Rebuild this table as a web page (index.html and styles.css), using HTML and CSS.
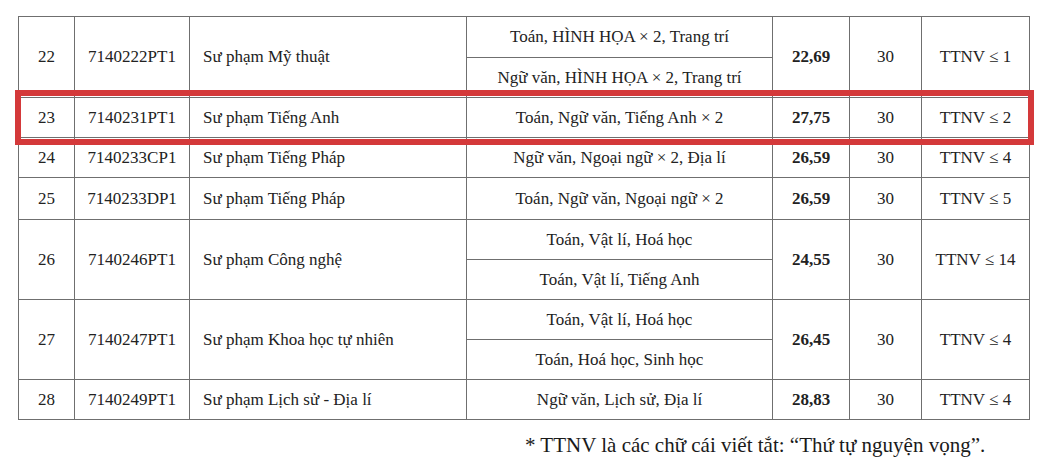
FILE: index.html
```html
<!DOCTYPE html>
<html lang="vi">
<head>
<meta charset="utf-8">
<title>Điểm chuẩn</title>
<link rel="stylesheet" href="styles.css">
</head>
<body>
<div class="page">
  <div class="table-wrap">
    <table class="scores">
      <colgroup>
        <col class="c-stt"><col class="c-code"><col class="c-name"><col class="c-subj"><col class="c-score"><col class="c-quota"><col class="c-ttnv">
      </colgroup>
      <tbody>
        <tr class="r41">
          <td class="ctr" rowspan="2">22</td>
          <td class="ctr" rowspan="2">7140222PT1</td>
          <td class="name" rowspan="2">Sư phạm Mỹ thuật</td>
          <td class="ctr">Toán, HÌNH HỌA × 2, Trang trí</td>
          <td class="ctr bold" rowspan="2">22,69</td>
          <td class="ctr" rowspan="2">30</td>
          <td class="ctr" rowspan="2">TTNV ≤ 1</td>
        </tr>
        <tr><td class="ctr">Ngữ văn, HÌNH HỌA × 2, Trang trí</td></tr>
        <tr>
          <td class="ctr">23</td>
          <td class="ctr">7140231PT1</td>
          <td class="name">Sư phạm Tiếng Anh</td>
          <td class="ctr">Toán, Ngữ văn, Tiếng Anh × 2</td>
          <td class="ctr bold">27,75</td>
          <td class="ctr">30</td>
          <td class="ctr">TTNV ≤ 2</td>
        </tr>
        <tr>
          <td class="ctr">24</td>
          <td class="ctr">7140233CP1</td>
          <td class="name">Sư phạm Tiếng Pháp</td>
          <td class="ctr">Ngữ văn, Ngoại ngữ × 2, Địa lí</td>
          <td class="ctr bold">26,59</td>
          <td class="ctr">30</td>
          <td class="ctr">TTNV ≤ 4</td>
        </tr>
        <tr class="r42">
          <td class="ctr">25</td>
          <td class="ctr">7140233DP1</td>
          <td class="name">Sư phạm Tiếng Pháp</td>
          <td class="ctr">Toán, Ngữ văn, Ngoại ngữ × 2</td>
          <td class="ctr bold">26,59</td>
          <td class="ctr">30</td>
          <td class="ctr">TTNV ≤ 5</td>
        </tr>
        <tr>
          <td class="ctr" rowspan="2">26</td>
          <td class="ctr" rowspan="2">7140246PT1</td>
          <td class="name" rowspan="2">Sư phạm Công nghệ</td>
          <td class="ctr">Toán, Vật lí, Hoá học</td>
          <td class="ctr bold" rowspan="2">24,55</td>
          <td class="ctr" rowspan="2">30</td>
          <td class="ctr" rowspan="2">TTNV ≤ 14</td>
        </tr>
        <tr><td class="ctr">Toán, Vật lí, Tiếng Anh</td></tr>
        <tr>
          <td class="ctr" rowspan="2">27</td>
          <td class="ctr" rowspan="2">7140247PT1</td>
          <td class="name" rowspan="2">Sư phạm Khoa học tự nhiên</td>
          <td class="ctr">Toán, Vật lí, Hoá học</td>
          <td class="ctr bold" rowspan="2">26,45</td>
          <td class="ctr" rowspan="2">30</td>
          <td class="ctr" rowspan="2">TTNV ≤ 4</td>
        </tr>
        <tr><td class="ctr">Toán, Hoá học, Sinh học</td></tr>
        <tr>
          <td class="ctr">28</td>
          <td class="ctr">7140249PT1</td>
          <td class="name">Sư phạm Lịch sử - Địa lí</td>
          <td class="ctr">Ngữ văn, Lịch sử, Địa lí</td>
          <td class="ctr bold">28,83</td>
          <td class="ctr">30</td>
          <td class="ctr">TTNV ≤ 4</td>
        </tr>
      </tbody>
    </table>
    <div class="highlight"></div>
  </div>
  <p class="note">* TTNV là các chữ cái viết tắt: “Thứ tự nguyện vọng”.</p>
</div>
</body>
</html>
```
FILE: styles.css
```css
html, body {
  margin: 0;
  padding: 0;
  background: #ffffff;
}
body {
  font-family: "Liberation Serif", Tinos, "Times New Roman", Times, "Nimbus Roman", "Nimbus Roman No9 L", "Noto Serif", FreeSerif, "DejaVu Serif", Georgia, serif;
  color: #222222;
}
.page {
  width: 1044px;
  height: 473px;
  padding: 16px 0 0 18px;
  box-sizing: border-box;
}
.table-wrap {
  position: relative;
  width: 1011px;
}
.scores {
  border-collapse: collapse;
  table-layout: fixed;
  width: 1011px;
  font-size: 17px;
}
.c-stt { width: 56px; }
.c-code { width: 115px; }
.c-name { width: 277px; }
.c-subj { width: 306px; }
.c-score { width: 77px; }
.c-quota { width: 72px; }
.c-ttnv { width: 108px; }
.scores td {
  border: 1px solid #6f6f6f;
  height: 40px;
  padding: 0;
  box-sizing: border-box;
  vertical-align: middle;
  white-space: nowrap;
}
.scores tr.r41 td { height: 41px; }
.scores tr.r42 td { height: 42px; }
.scores td[rowspan] { height: auto; }
.ctr { text-align: center; }
.name { text-align: left; padding-left: 13px !important; }
.bold { font-weight: bold; }
.highlight {
  position: absolute;
  left: -3px;
  top: 74px;
  width: 1019px;
  height: 55px;
  box-sizing: border-box;
  border: 6px solid #d4393a;
  pointer-events: none;
}
.note {
  margin: 13px 0 0 507px;
  font-size: 21px;
  color: #1a1a1a;
  white-space: nowrap;
}
```
